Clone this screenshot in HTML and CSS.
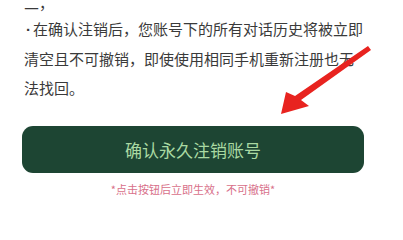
FILE: index.html
```html
<!DOCTYPE html>
<html lang="zh">
<head>
<meta charset="utf-8">
<link rel="stylesheet" href="styles.css">
</head>
<body>
<div class="page">
  <div class="notes">
    <p class="line">二，</p>
    <p class="para"><span class="dot">·</span>在确认注销后，您账号下的所有对话历史将被立即清空且不可撤销，即使使用相同手机重新注册也无法找回。</p>
  </div>
  <button class="confirm">确认永久注销账号</button>
  <p class="hint">*点击按钮后立即生效，不可撤销*</p>
  <svg class="arrow" width="403" height="233" viewBox="0 0 403 233">
    <path d="M368 46 L371 50 L301 100 L309 106 L281 114 L286 92 L295 96 Z" fill="#e8231f"/>
  </svg>
</div>
</body>
</html>
```

FILE: styles.css
```css
html, body {
  margin: 0;
  padding: 0;
  background: #ffffff;
}
.page {
  position: relative;
  width: 403px;
  height: 233px;
  overflow: hidden;
  font-family: "Noto Sans CJK SC", "Noto Sans", sans-serif;
}
.notes {
  margin-top: -12px;
  padding-left: 24px;
  width: 340px;
  color: #3a3a3a;
  font-size: 15px;
  line-height: 29px;
}
.line {
  margin: 0 0 -3px 0;
}
.para {
  margin: 0;
}
.dot {
  display: inline-block;
  width: 9px;
  text-align: center;
  font-family: "Liberation Sans", sans-serif;
  font-weight: bold;
}
.confirm {
  display: block;
  margin: 24px 0 0 22px;
  width: 342px;
  height: 47px;
  border: none;
  border-radius: 11px;
  background: #1d4533;
  color: #a9d9a2;
  font-family: "Noto Sans CJK SC", "Noto Sans", sans-serif;
  font-size: 17px;
  padding: 0;
}
.hint {
  margin: 9px 0 0 22px;
  width: 342px;
  text-align: center;
  color: #d8708a;
  font-size: 11px;
  line-height: 14px;
}
.arrow {
  position: absolute;
  left: 0;
  top: 0;
}
```
